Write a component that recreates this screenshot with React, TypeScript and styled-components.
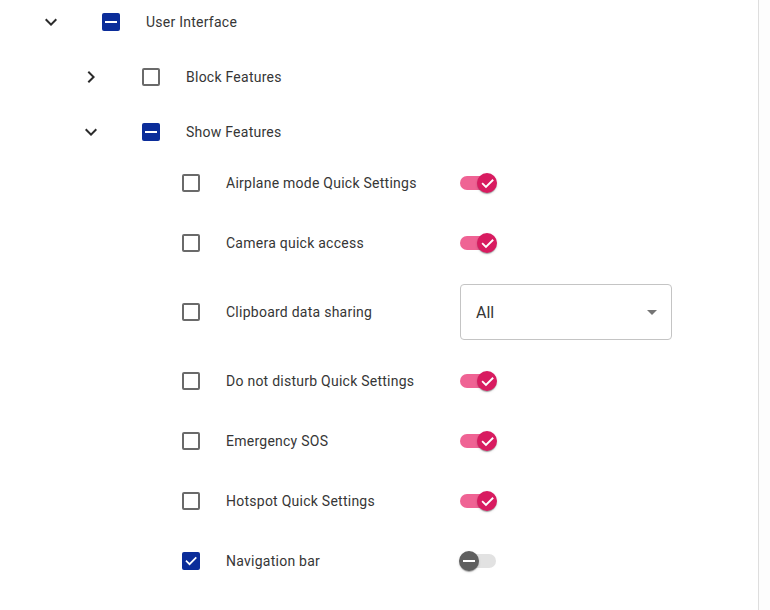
import React from "react";
import styled, { createGlobalStyle } from "styled-components";

const GlobalStyle = createGlobalStyle`
  html, body { margin: 0; padding: 0; background: #ffffff; }
  body { font-family: Roboto, "Noto Sans", "Liberation Sans", sans-serif; overflow: hidden; }
`;

const Page = styled.div`
  display: flex;
  width: 770px;
  height: 610px;
  background: #ffffff;
`;

const Content = styled.div`
  flex: 0 0 758px;
  border-right: 1px solid #dedede;
  display: flex;
  flex-direction: column;
  gap: 11px;
`;

const Aside = styled.div`
  flex: 1;
  background: #fdfdfd;
`;

const Row = styled.div<{ $level: number; $tall?: boolean }>`
  display: flex;
  align-items: center;
  height: ${(p) => (p.$tall ? 66 : p.$level === 2 ? 48 : 44)}px;
  padding-left: ${(p) => 39 + p.$level * 40}px;
`;

const ExpandSlot = styled.div`
  flex: 0 0 24px;
  width: 24px;
  height: 24px;
  display: flex;
  align-items: center;
  justify-content: center;
  color: #2b2b2b;
`;

const CheckBox = styled.div<{ $state: "on" | "off" | "mixed" }>`
  flex: 0 0 18px;
  width: 18px;
  height: 18px;
  margin-left: 39px;
  box-sizing: border-box;
  border-radius: 2px;
  display: flex;
  align-items: center;
  justify-content: center;
  background: ${(p) => (p.$state === "off" ? "transparent" : "#0b2d9a")};
  border: ${(p) => (p.$state === "off" ? "2px solid #6a6a6a" : "none")};
`;

const Label = styled.div<{ $leaf?: boolean }>`
  margin-left: 26px;
  font-size: 14px;
  letter-spacing: 0.25px;
  color: #363636;
  white-space: nowrap;
  ${(p) => (p.$leaf ? "flex: 0 0 234px;" : "")}
`;

const LeafList = styled.div`
  display: flex;
  flex-direction: column;
  gap: 12px;
  margin-top: -6px;
`;

const SwitchRoot = styled.div`
  position: relative;
  width: 36px;
  height: 22px;
  display: flex;
  align-items: center;
`;

const Track = styled.div<{ $on: boolean }>`
  width: 36px;
  height: 14px;
  border-radius: 7px;
  background: ${(p) => (p.$on ? "#ef6394" : "#e2e2e2")};
`;

const Thumb = styled.div<{ $on: boolean }>`
  position: absolute;
  top: 1px;
  left: ${(p) => (p.$on ? 17 : -1)}px;
  width: 20px;
  height: 20px;
  border-radius: 50%;
  background: ${(p) => (p.$on ? "#d81b60" : "#5f5f5f")};
  box-shadow: 0 2px 1px -1px rgba(0,0,0,0.2), 0 1px 1px 0 rgba(0,0,0,0.14), 0 1px 3px 0 rgba(0,0,0,0.12);
  display: flex;
  align-items: center;
  justify-content: center;
`;

const SelectBox = styled.div`
  box-sizing: border-box;
  width: 212px;
  height: 56px;
  border: 1px solid #c4c4c4;
  border-radius: 4px;
  display: flex;
  align-items: center;
  justify-content: space-between;
  padding: 0 7px 0 15px;
  font-size: 16px;
  color: #363636;
`;

const ChevronDown = () => (
  <svg width="24" height="24" viewBox="0 0 24 24" fill="currentColor">
    <path d="M16.59 8.59 12 13.17 7.41 8.59 6 10l6 6 6-6z" />
  </svg>
);

const ChevronRight = () => (
  <svg width="24" height="24" viewBox="0 0 24 24" fill="currentColor">
    <path d="M10 6 8.59 7.41 13.17 12l-4.58 4.59L10 18l6-6z" />
  </svg>
);

const CheckMark = ({ size = 14 }: { size?: number }) => (
  <svg width={size} height={size} viewBox="0 0 24 24" fill="none" stroke="#ffffff" strokeWidth="3" strokeLinecap="square">
    <path d="M4.5 12.5l5 5L20 7" />
  </svg>
);

const Minus = ({ w = 12, color = "#ffffff" }: { w?: number; color?: string }) => (
  <svg width={w} height="2" viewBox={`0 0 ${w} 2`}>
    <rect width={w} height="2" fill={color} />
  </svg>
);

const Check = ({ state }: { state: "on" | "off" | "mixed" }) => (
  <CheckBox $state={state}>
    {state === "mixed" && <Minus />}
    {state === "on" && <CheckMark />}
  </CheckBox>
);

const Switch = ({ on }: { on: boolean }) => (
  <SwitchRoot>
    <Track $on={on} />
    <Thumb $on={on}>{on ? <CheckMark size={15} /> : <Minus w={12} />}</Thumb>
  </SwitchRoot>
);

type Leaf = { label: string; checked: boolean; control: "on" | "off" | "select" };

const leaves: Leaf[] = [
  { label: "Airplane mode Quick Settings", checked: false, control: "on" },
  { label: "Camera quick access", checked: false, control: "on" },
  { label: "Clipboard data sharing", checked: false, control: "select" },
  { label: "Do not disturb Quick Settings", checked: false, control: "on" },
  { label: "Emergency SOS", checked: false, control: "on" },
  { label: "Hotspot Quick Settings", checked: false, control: "on" },
  { label: "Navigation bar", checked: true, control: "off" },
];

export default function App() {
  return (
    <>
      <GlobalStyle />
      <Page>
        <Content>
          <Row $level={0}>
            <ExpandSlot><ChevronDown /></ExpandSlot>
            <Check state="mixed" />
            <Label>User Interface</Label>
          </Row>
          <Row $level={1}>
            <ExpandSlot><ChevronRight /></ExpandSlot>
            <Check state="off" />
            <Label>Block Features</Label>
          </Row>
          <Row $level={1}>
            <ExpandSlot><ChevronDown /></ExpandSlot>
            <Check state="mixed" />
            <Label>Show Features</Label>
          </Row>
          <LeafList>
            {leaves.map((l) => (
              <Row key={l.label} $level={2} $tall={l.control === "select"}>
                <ExpandSlot />
                <Check state={l.checked ? "on" : "off"} />
                <Label $leaf>{l.label}</Label>
                {l.control === "select" ? (
                  <SelectBox>
                    <span>All</span>
                    <svg width="24" height="24" viewBox="0 0 24 24" fill="rgba(0,0,0,0.54)">
                      <path d="M7 10l5 5 5-5z" />
                    </svg>
                  </SelectBox>
                ) : (
                  <Switch on={l.control === "on"} />
                )}
              </Row>
            ))}
          </LeafList>
        </Content>
        <Aside />
      </Page>
    </>
  );
}
